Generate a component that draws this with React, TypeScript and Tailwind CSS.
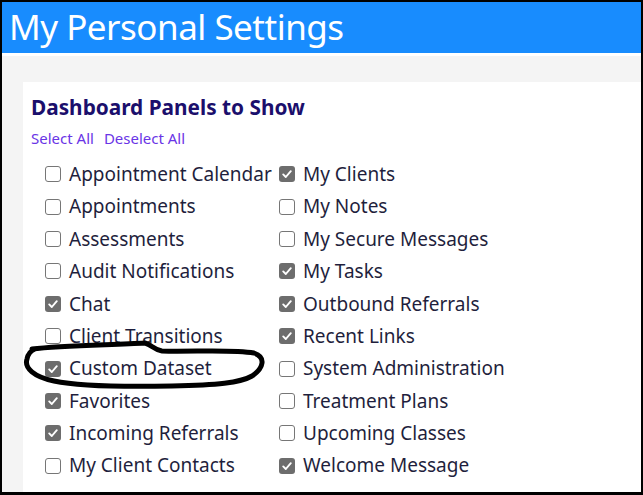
import React from 'react';

const left: [string, boolean][] = [
  ['Appointment Calendar', false],
  ['Appointments', false],
  ['Assessments', false],
  ['Audit Notifications', false],
  ['Chat', true],
  ['Client Transitions', false],
  ['Custom Dataset', true],
  ['Favorites', true],
  ['Incoming Referrals', true],
  ['My Client Contacts', false],
];

const right: [string, boolean][] = [
  ['My Clients', true],
  ['My Notes', false],
  ['My Secure Messages', false],
  ['My Tasks', true],
  ['Outbound Referrals', true],
  ['Recent Links', true],
  ['System Administration', false],
  ['Treatment Plans', false],
  ['Upcoming Classes', false],
  ['Welcome Message', true],
];

function Box({ checked }: { checked: boolean }) {
  if (checked) {
    return (
      <span className="flex h-[16px] w-[16px] shrink-0 items-center justify-center rounded-[3px] bg-[#6d6d6d]">
        <svg width="12" height="12" viewBox="0 0 12 12" fill="none">
          <path d="M2.2 6.4 L4.8 9 L9.8 3.2" stroke="white" strokeWidth="1.9" strokeLinecap="round" strokeLinejoin="round" />
        </svg>
      </span>
    );
  }
  return <span className="h-[16px] w-[16px] shrink-0 rounded-[3px] border-[1.5px] border-[#767676] bg-white" />;
}

function Column({ items, width }: { items: [string, boolean][]; width: string }) {
  return (
    <div className={`flex flex-col ${width}`}>
      {items.map(([label, checked]) => (
        <label key={label} className="flex h-[32.4px] items-center gap-[8px] whitespace-nowrap">
          <Box checked={checked} />
          <span className="text-[19px] text-[#1f1f3d]">{label}</span>
        </label>
      ))}
    </div>
  );
}

export default function App() {
  return (
    <div
      className="relative flex h-[495px] w-[643px] flex-col overflow-hidden border-t-2 border-r-2 border-b-[3px] border-l-2 border-black bg-[#f4f4f4]"
      style={{ fontFamily: '"Noto Sans", "Open Sans", sans-serif' }}
    >
      <header className="h-[54px] shrink-0 border-b-[3px] border-white bg-[#188cfe] pl-[7px]">
        <h1 className="text-[35px] leading-[50px] tracking-[-0.5px] text-white">My Personal Settings</h1>
      </header>

      <div className="flex flex-1 pt-[26px] pl-[21px]">
        <section className="flex-1 bg-white pl-[8px] pt-[11px]">
          <h2 className="text-[20.8px] font-bold leading-[28px] text-[#1b0f6c]">Dashboard Panels to Show</h2>
          <div className="mt-[6px] flex gap-[10px] text-[15px] leading-[22px] text-[#6a35e6]">
            <a>Select All</a>
            <a>Deselect All</a>
          </div>
          <div className="mt-[9px] flex pl-[14px]">
            <Column items={left} width="w-[234px]" />
            <Column items={right} width="w-[300px]" />
          </div>
        </section>
      </div>

      <svg className="pointer-events-none absolute left-0 top-0" width="643" height="495" viewBox="0 0 643 495" fill="none">
        <path
          d="M30 347 C 60 343, 110 343, 143 341 C 150 343, 152 348, 160 349 C 190 350, 230 347, 252 351 C 264 355, 262 366, 250 374 C 238 381, 215 383, 170 384 C 120 385, 75 384, 52 379 C 32 375, 22 366, 25 357 C 26 352, 28 349, 33 347"
          stroke="black"
          strokeWidth="5"
          strokeLinecap="round"
          strokeLinejoin="round"
        />
      </svg>
    </div>
  );
}
